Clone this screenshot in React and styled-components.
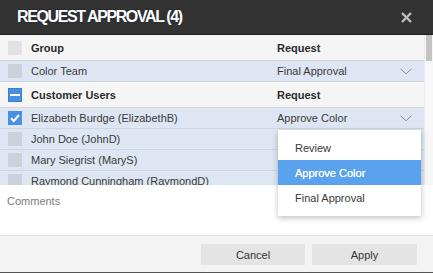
import React from 'react';
import styled, { createGlobalStyle } from 'styled-components';

const GlobalStyle = createGlobalStyle`
  html, body {
    margin: 0;
    padding: 0;
    background: #ffffff;
  }
  body {
    font-family: 'Liberation Sans', Arial, sans-serif;
    font-size: 11px;
    color: #333;
  }
`;

const Dialog = styled.div`
  position: relative;
  width: 433px;
  height: 273px;
  display: flex;
  flex-direction: column;
  background: #fff;
  overflow: hidden;
`;

const Header = styled.div`
  box-sizing: border-box;
  height: 35px;
  flex: none;
  background: #333333;
  border-bottom: 1px solid #1f1f1f;
  display: flex;
  align-items: center;
  justify-content: space-between;
  padding: 0 20px 0 17px;
`;

const Title = styled.h1`
  margin: 0;
  font-size: 16px;
  font-weight: 700;
  letter-spacing: -1.4px;
  color: #fff;
  text-shadow: 0 0 2px rgba(20, 30, 60, 0.9);
`;

const CloseButton = styled.button`
  border: 0;
  background: none;
  padding: 0;
  display: flex;
  cursor: pointer;
`;

const ListArea = styled.div`
  height: 150px;
  flex: none;
  display: flex;
  overflow: hidden;
`;

const Rows = styled.div`
  flex: 1;
  display: flex;
  flex-direction: column;
`;

const Scrollbar = styled.div`
  width: 8px;
  flex: none;
  background: #f7f7f7;
  border-left: 1px solid #ececec;
  display: flex;
  flex-direction: column;
`;

const Thumb = styled.div`
  height: 26px;
  margin-left: 1px;
  width: 6px;
  background: #c3c3c3;
`;

const Row = styled.div`
  box-sizing: border-box;
  flex: none;
  display: grid;
  grid-template-columns: 23px 1fr 147px;
  align-items: center;
  padding-left: 8px;
  height: ${p => (p.$head ? '26px' : '21px')};
  background: ${p => (p.$head ? '#f5f5f5' : '#dde6f2')};
  border-bottom: 1px solid ${p => (p.$head ? '#d6d6d6' : '#cdd5e0')};
  font-weight: ${p => (p.$head ? 700 : 400)};
  color: ${p => (p.$head ? '#2a2a2a' : '#3a3a3a')};
`;

const Box = styled.span`
  box-sizing: border-box;
  width: 14px;
  height: 14px;
  display: flex;
  align-items: center;
  justify-content: center;
  background: ${p =>
    p.$state === 'checked' || p.$state === 'partial'
      ? '#4a90e2'
      : p.$head
      ? '#e2e2e2'
      : '#cbd2dc'};
  border: ${p => (p.$state === 'partial' ? '1px solid #3b7fcf' : 'none')};
`;

const Dash = styled.span`
  width: 10px;
  height: 2px;
  background: #fff;
`;

const Cell = styled.span`
  white-space: nowrap;
  overflow: hidden;
`;

const RequestCell = styled.span`
  display: flex;
  align-items: center;
  justify-content: space-between;
  padding-right: 12px;
`;

const Comments = styled.div`
  box-sizing: border-box;
  height: 51px;
  flex: none;
  padding: 10px 7px;
  color: #7d7d7d;
  border-bottom: 1px solid #e2e2e2;
`;

const Footer = styled.div`
  flex: 1;
  background: #f3f3f3;
  border-bottom: 1px solid #555;
  display: flex;
  justify-content: flex-end;
  align-items: flex-start;
  gap: 7px;
  padding: 8px 16px 0 0;
`;

const Button = styled.button`
  width: ${p => p.$w}px;
  height: 21px;
  border: 0;
  background: #e4e4e4;
  font-family: inherit;
  font-size: 11px;
  color: #333;
  padding: 0;
`;

const Menu = styled.ul`
  position: absolute;
  top: 130px;
  left: 278px;
  width: 143px;
  margin: 0;
  padding: 5px 0 6px;
  list-style: none;
  background: #fff;
  box-shadow: 0 2px 6px rgba(0, 0, 0, 0.25);
`;

const MenuItem = styled.li`
  height: 25px;
  display: flex;
  align-items: center;
  padding-left: 17px;
  background: ${p => (p.$active ? '#5ba2ee' : 'transparent')};
  color: ${p => (p.$active ? '#fff' : '#3a3a3a')};
  text-shadow: ${p => (p.$active ? '0 0 0.4px #fff' : 'none')};
`;

const Chevron = () => (
  <svg width="12" height="7" viewBox="0 0 12 7">
    <polyline points="0.5,0.8 6,5.8 11.5,0.8" fill="none" stroke="#8d8f94" strokeWidth="1" />
  </svg>
);

const Check = () => (
  <svg width="12" height="12" viewBox="0 0 12 12">
    <polyline points="2,6.2 4.8,9 10,3" fill="none" stroke="#fff" strokeWidth="2" />
  </svg>
);

const Checkbox = ({ state, head }) => (
  <Box $state={state} $head={head}>
    {state === 'checked' && <Check />}
    {state === 'partial' && <Dash />}
  </Box>
);

const users = [
  { name: 'Elizabeth Burdge (ElizabethB)', request: 'Approve Color', checked: true },
  { name: 'John Doe (JohnD)' },
  { name: 'Mary Siegrist (MaryS)' },
  { name: 'Raymond Cunningham (RaymondD)' },
];

export default function App() {
  return (
    <>
      <GlobalStyle />
      <Dialog>
        <Header>
          <Title>REQUEST APPROVAL (4)</Title>
          <CloseButton aria-label="close">
            <svg width="13" height="13" viewBox="0 0 13 13">
              <path d="M2 2 L11 11 M11 2 L2 11" stroke="#bdbdbd" strokeWidth="2.4" />
            </svg>
          </CloseButton>
        </Header>

        <ListArea>
          <Rows>
            <Row $head>
              <Checkbox head />
              <Cell>Group</Cell>
              <Cell>Request</Cell>
            </Row>
            <Row>
              <Checkbox />
              <Cell>Color Team</Cell>
              <RequestCell>
                Final Approval
                <Chevron />
              </RequestCell>
            </Row>
            <Row $head>
              <Checkbox head state="partial" />
              <Cell>Customer Users</Cell>
              <Cell>Request</Cell>
            </Row>
            {users.map(u => (
              <Row key={u.name}>
                <Checkbox state={u.checked ? 'checked' : undefined} />
                <Cell>{u.name}</Cell>
                <RequestCell>
                  {u.request}
                  {u.request && <Chevron />}
                </RequestCell>
              </Row>
            ))}
          </Rows>
          <Scrollbar>
            <Thumb />
          </Scrollbar>
        </ListArea>

        <Comments>Comments</Comments>

        <Footer>
          <Button $w={104}>Cancel</Button>
          <Button $w={105}>Apply</Button>
        </Footer>

        <Menu>
          <MenuItem>Review</MenuItem>
          <MenuItem $active>Approve Color</MenuItem>
          <MenuItem>Final Approval</MenuItem>
        </Menu>
      </Dialog>
    </>
  );
}
